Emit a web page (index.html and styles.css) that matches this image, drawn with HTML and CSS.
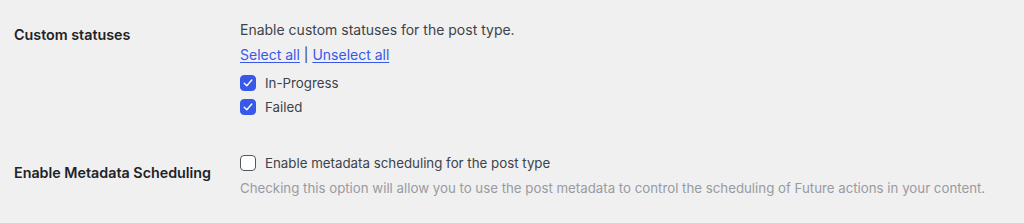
FILE: index.html
```html
<!DOCTYPE html>
<html lang="en">
<head>
    <meta charset="UTF-8">
    <title>Future settings</title>
    <link rel="stylesheet" href="styles.css">
</head>
<body>

    <div class="settings">
        <!-- Custom statuses -->
        <div class="row row-statuses">
            <div class="row-label">Custom statuses</div>
            <div class="row-field">
                <p class="field-text">Enable custom statuses for the post type.</p>
                <p class="select-links"><a href="#">Select all</a> | <a href="#">Unselect all</a></p>
                <label class="check-row">
                    <span class="check checked">
                        <svg width="12" height="12" viewBox="0 0 12 12"><path d="M2.2 6.3 L4.8 8.8 L9.8 3" fill="none" stroke="#fff" stroke-width="1.4" stroke-linecap="round" stroke-linejoin="round"/></svg>
                    </span>
                    In-Progress
                </label>
                <label class="check-row">
                    <span class="check checked">
                        <svg width="12" height="12" viewBox="0 0 12 12"><path d="M2.2 6.3 L4.8 8.8 L9.8 3" fill="none" stroke="#fff" stroke-width="1.4" stroke-linecap="round" stroke-linejoin="round"/></svg>
                    </span>
                    Failed
                </label>
            </div>
        </div>

        <!-- Metadata scheduling -->
        <div class="row row-metadata">
            <div class="row-label">Enable Metadata Scheduling</div>
            <div class="row-field">
                <label class="check-row">
                    <span class="check"></span>
                    Enable metadata scheduling for the post type
                </label>
                <p class="description">Checking this option will allow you to use the post metadata to control the scheduling of Future actions in your content.</p>
            </div>
        </div>
    </div>

</body>
</html>
```

FILE: styles.css
```css
body {
    margin: 0;
    background-color: #f0f0f1;
    font-family: Inter, "Liberation Sans", sans-serif;
    color: #3c434a;
}

.settings {
    padding-left: 14px;
}

.row {
    display: flex;
}

.row-label {
    width: 226px;
    flex-shrink: 0;
    font-size: 14.3px;
    font-weight: 600;
    line-height: 18px;
    color: #1d2327;
}

.row-field p {
    margin: 0;
}

/* Custom statuses row */
.row-statuses .row-label {
    padding-top: 26px;
}

.row-statuses .row-field {
    padding-top: 20px;
    padding-bottom: 15px;
}

.field-text {
    font-size: 14px;
    line-height: 20px;
}

.select-links {
    font-size: 14px;
    line-height: 20px;
    margin-top: 5px !important;
    margin-bottom: 6px !important;
}

.select-links a {
    color: #3858e9;
    text-decoration: underline;
    text-underline-offset: 2px;
}

.check-row {
    display: flex;
    align-items: center;
    gap: 9px;
    height: 24px;
    font-size: 13.3px;
}

.check {
    width: 16px;
    height: 16px;
    box-sizing: border-box;
    border: 1.5px solid #50575e;
    border-radius: 4px;
    background-color: #fff;
    display: flex;
    align-items: center;
    justify-content: center;
}

.check.checked {
    border-color: #3858e9;
    background-color: #3858e9;
}

/* Metadata row */
.row-metadata .row-label {
    padding-top: 30px;
}

.row-metadata .row-field {
    padding-top: 17px;
}

.description {
    font-size: 13.27px;
    line-height: 20px;
    color: #989ba1;
    margin-top: 3px !important;
}
```
